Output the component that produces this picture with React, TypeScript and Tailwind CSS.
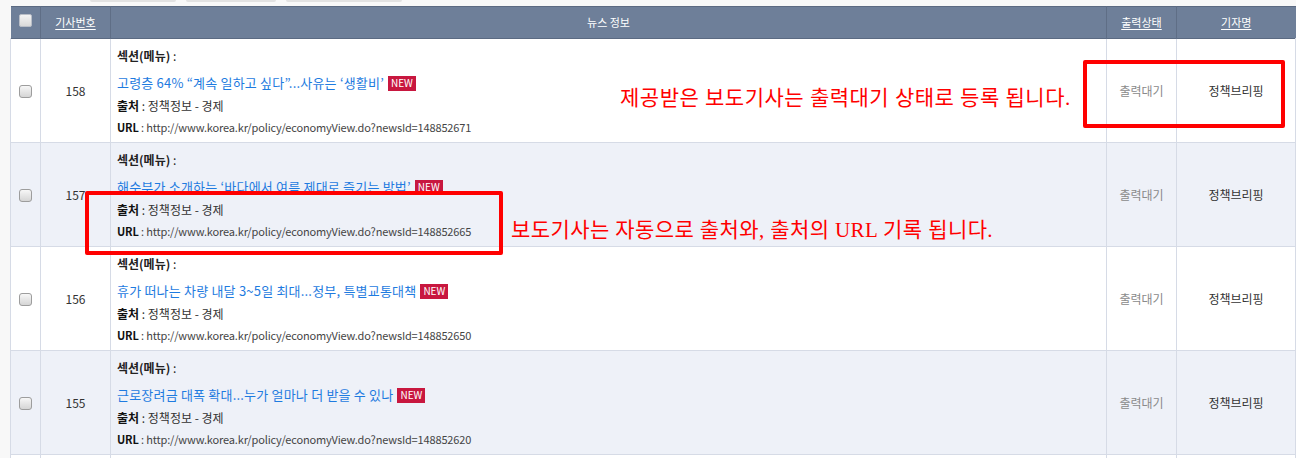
import React from "react";

type Article = {
  no: number;
  title: string;
  newsId: string;
};

const articles: Article[] = [
  { no: 158, title: "고령층 64% “계속 일하고 싶다”...사유는 ‘생활비’", newsId: "148852671" },
  { no: 157, title: "해수부가 소개하는 ‘바다에서 여름 제대로 즐기는 방법’", newsId: "148852665" },
  { no: 156, title: "휴가 떠나는 차량 내달 3~5일 최대...정부, 특별교통대책", newsId: "148852650" },
  { no: 155, title: "근로장려금 대폭 확대...누가 얼마나 더 받을 수 있나", newsId: "148852620" },
];

function CheckBox({ header = false }: { header?: boolean }) {
  return (
    <span
      className={
        header
          ? "inline-block size-[13px] rounded-[2px] border border-[#b9bec7] bg-gradient-to-b from-[#f4f4f4] to-[#d9d9d9]"
          : "inline-block size-[13px] rounded-[3px] border border-[#9d9d9d] bg-gradient-to-b from-[#f7f7f7] to-[#d5d5d5]"
      }
    />
  );
}

function ArticleRow({ a, odd }: { a: Article; odd: boolean }) {
  const bg = odd ? "bg-white" : "bg-[#eef1f8]";
  return (
    <tr className={`${bg} h-[104px] border-b border-[#d6dbe6]`}>
      <td className="border-x border-[#d6dbe6] text-center align-middle">
        <CheckBox />
      </td>
      <td className="border-r border-[#d6dbe6] text-center align-middle text-[12px] text-[#333]">{a.no}</td>
      <td className="border-r border-[#d6dbe6] align-top px-[6px] pt-[6px]">
        <div className="leading-[22px] text-[12px] text-[#222]">
          <b className="font-bold">섹션(메뉴)</b> :
        </div>
        <div className="mt-[5px] flex items-center leading-[22px] text-[13px] tracking-[0.2px] text-[#1e7be0]">
          <span>{a.title}</span>
          <span className="ml-[4px] inline-flex h-[15px] items-center bg-[#c8173f] px-[3px] text-[10px] leading-none tracking-normal text-white">
            NEW
          </span>
        </div>
        <div className="mt-[1px] leading-[21px] text-[12px] text-[#333]">
          <b className="font-bold text-[#111]">출처</b> : 정책정보 - 경제
        </div>
        <div className="leading-[22px] text-[11px] tracking-[-0.15px] text-[#444]">
          <b className="font-bold text-[#111]">URL</b> : http://www.korea.kr/policy/economyView.do?newsId={a.newsId}
        </div>
      </td>
      <td className="border-r border-[#d6dbe6] text-center align-middle text-[12px] text-[#8a8a8a]">출력대기</td>
      <td className="border-r border-[#d6dbe6] text-center align-middle text-[12px] text-[#333]">정책브리핑</td>
    </tr>
  );
}

export default function App() {
  return (
    <div className="relative h-[458px] w-[1296px] overflow-hidden bg-[#f8f8f8] font-['Noto_Sans_CJK_KR',sans-serif]">
      {/* bottoms of the tab buttons above the table */}
      <div className="flex h-[6px] gap-[10px] pl-[90px]">
        <div className="h-[2px] w-[86px] rounded-b-[3px] border-b-2 border-[#e2e2e2] bg-white" />
        <div className="h-[2px] w-[90px] rounded-b-[3px] border-b-2 border-[#e2e2e2] bg-white" />
        <div className="h-[2px] w-[116px] rounded-b-[3px] border-b-2 border-[#e2e2e2] bg-white" />
      </div>

      <div className="pl-[10px]">
        <table className="w-[1286px] table-fixed border-collapse">
          <colgroup>
            <col className="w-[30px]" />
            <col className="w-[70px]" />
            <col />
            <col className="w-[70px]" />
            <col className="w-[119px]" />
          </colgroup>
          <thead>
            <tr className="h-[32px] border-y border-[#5b6a82] bg-[#6e7f99] text-[11px] text-white">
              <th className="border-r border-[#5f6e86] text-center font-normal">
                <CheckBox header />
              </th>
              <th className="border-r border-[#5f6e86] font-normal underline underline-offset-2">기사번호</th>
              <th className="border-r border-[#5f6e86] font-normal">뉴스 정보</th>
              <th className="border-r border-[#5f6e86] font-normal underline underline-offset-2">출력상태</th>
              <th className="font-normal underline underline-offset-2">기자명</th>
            </tr>
          </thead>
          <tbody>
            {articles.map((a, i) => (
              <ArticleRow key={a.no} a={a} odd={i % 2 === 0} />
            ))}
            <tr className="h-[20px] bg-white">
              <td className="border-x border-[#d6dbe6]" />
              <td className="border-r border-[#d6dbe6]" />
              <td className="border-r border-[#d6dbe6]" />
              <td className="border-r border-[#d6dbe6]" />
              <td className="border-r border-[#d6dbe6]" />
            </tr>
          </tbody>
        </table>
      </div>

      {/* annotations drawn over the screenshot */}
      <div className="absolute left-[1083px] top-[60px] h-[68px] w-[202px] rounded-[2px] border-4 border-[#ff0000]" />
      <div className="absolute left-[85px] top-[191px] h-[64px] w-[418px] rounded-[2px] border-4 border-[#ff0000]" />
      <div className="absolute left-[620px] top-[85px] font-['Liberation_Serif','Noto_Sans_CJK_KR',serif] text-[21px] leading-[26px] tracking-[0.5px] text-[#ff0000]">
        제공받은 보도기사는 출력대기 상태로 등록 됩니다.
      </div>
      <div className="absolute left-[511px] top-[217px] font-['Liberation_Serif','Noto_Sans_CJK_KR',serif] text-[21px] leading-[26px] tracking-[0.4px] text-[#ff0000]">
        보도기사는 자동으로 출처와, 출처의 URL 기록 됩니다.
      </div>
    </div>
  );
}
